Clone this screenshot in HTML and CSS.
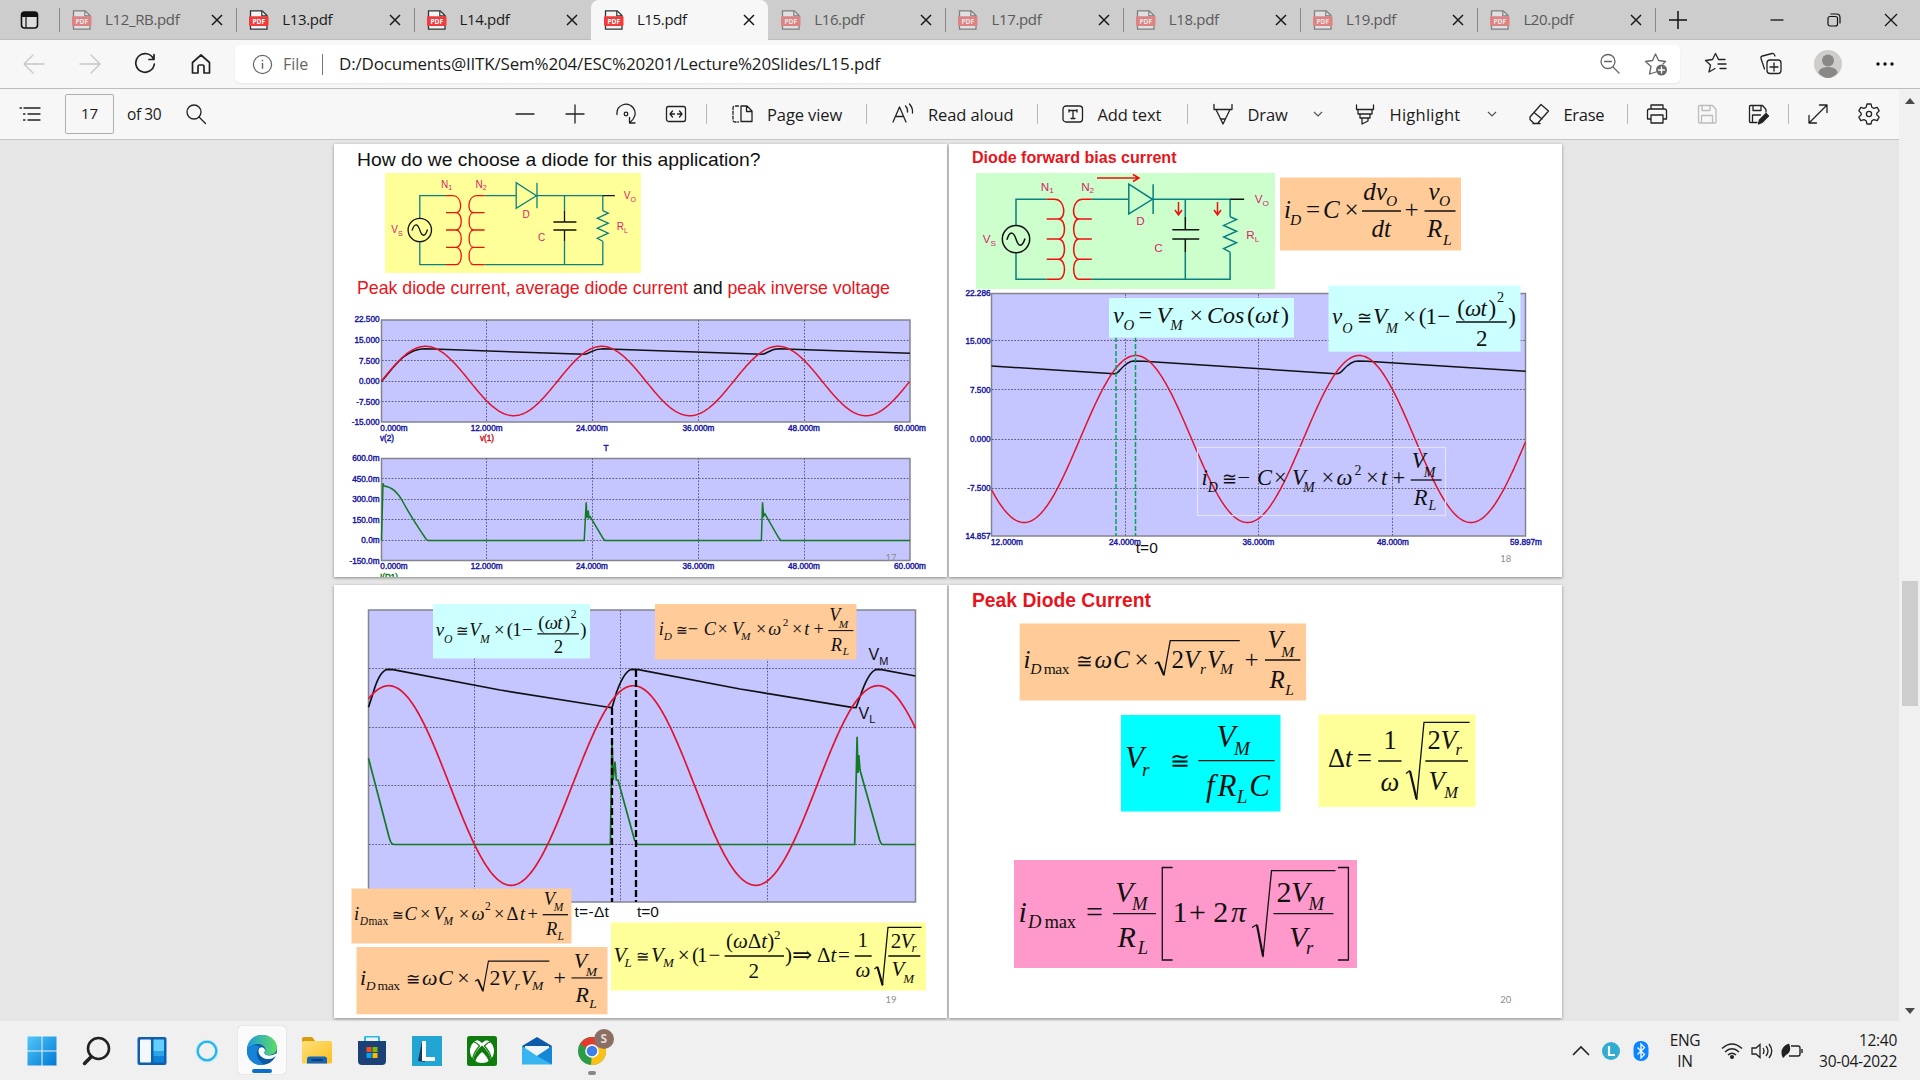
FILE: index.html
```html
<!DOCTYPE html>
<html lang="en">
<head>
<meta charset="utf-8">
<title>L15.pdf</title>
<link rel="stylesheet" href="styles.css">
</head>
<body>
<svg class="defs" width="0" height="0">
  <defs>
    <symbol id="pdf" viewBox="0 0 20 20">
      <path d="M1.500 .8h11.700l4.800 4.800v13.600H1.500z" fill="#f4f4f4" stroke="#333" stroke-width="1.300"/>
      <path d="M12.800 .8v5h5.200" fill="none" stroke="#333" stroke-width="1.200"/>
      <rect x="0" y="6.300" width="19.500" height="9.700" rx="1" fill="#f03c3c"/>
      <text x="9.800" y="14" text-anchor="middle" class="pdf-word">PDF</text>
    </symbol>
    <symbol id="close" viewBox="0 0 12 12"><path d="M1 1l10 10M11 1L1 11" stroke="#1b1b1b" stroke-width="1.500" fill="none"/></symbol>
    <symbol id="chev" viewBox="0 0 12 12"><path d="M2 4l4 4 4-4" stroke="#555" stroke-width="1.200" fill="none"/></symbol>
    <g id="circuit" fill="none" stroke-width="1.300">
      <g stroke="#0a8080">
        <path d="M446 195.700H419.800V218M419.800 242V264.700H446M484.600 195.700H516.200M536.400 195.700H602.800V210.700M484.600 264.700H602.800V241.300M564.500 195.700V210.700M564.500 241.300V264.700"/>
        <path d="M516.200 182.700V208.300L536.400 195.700zM537 182.700V208.300"/>
        <path d="M602.800 210.700l5.500 2.500-11 5 11 5-11 5 11 5-11 5 5.500 3"/>
      </g>
      <g stroke="#f01010">
        <path d="M446 195.700h7c9 0 10 17 3 17h-10h10c7 0 7 17.300 0 17.300h-10h10c7 0 7 17.300 0 17.300h-10h10c7 0 7 17.400 0 17.400h-10"/>
        <path d="M484.600 195.700h-8c-9 0-10 17-3 17h11h-11c-6 0-6 17.300 0 17.300h11h-11c-6 0-6 17.300 0 17.300h11h-11c-6 0-6 17.400 0 17.400h11"/>
      </g>
      <g stroke="#111">
        <circle cx="419.800" cy="230" r="11.700"/>
        <path d="M412 230.500c3-9 6-6 8 0s5 7 7.500-1M602.800 195.700h12M564.500 210.700V222M553.400 222h23M553.400 230h23M564.500 230V241.300"/>
      </g>
      <g class="part">
        <text x="441" y="188.300">N<tspan class="idx" dy="2">1</tspan></text>
        <text x="475.500" y="188.300">N<tspan class="idx" dy="2">2</tspan></text>
        <text x="522.600" y="218">D</text>
        <text x="538" y="241">C</text>
        <text x="623.800" y="199.300">V<tspan class="idx" dy="2.500">O</tspan></text>
        <text x="616.700" y="230">R<tspan class="idx" dy="2.500">L</tspan></text>
        <text x="391.300" y="233.300">V<tspan class="idx" dy="2.500">S</tspan></text>
      </g>
    </g>
    <g id="eq-vo" class="eq" font-size="23">
      <text x="1332 1373" y="324.300">vV</text><text class="u cg" x="1356.500" y="324.300">≅</text><text class="u" x="1403" y="324.300">×</text>
      <text class="s" x="1342.200 1386" y="332.700">OM</text>
      <text class="u" x="1418.700 1425.500 1437.300 1508.300" y="324.300">(1−)</text>
      <path d="M1456 322h50.700"/>
      <text class="u" x="1457.300 1488.500" y="315.700">()</text><text x="1465 1480.500" y="315.700">ωt</text>
      <text class="s u" x="1497" y="302.300">2</text>
      <text class="u" x="1476" y="345.700">2</text>
    </g>
    <g id="eq-id" class="eq" font-size="22.500">
      <text x="1201.500 1257 1292 1336.500 1381" y="485.300">iCVωt</text>
      <text class="u cg" x="1222.300" y="485.300">≅</text>
      <text class="u" x="1237.500 1274 1321.500 1366 1392.500" y="485.300">−×××+</text>
      <text class="s" x="1207.800 1303" y="492">DM</text>
      <text class="s u" x="1354.500" y="474.700">2</text>
      <path d="M1410.600 480h31"/>
      <text x="1411.800" y="468">V</text><text class="s" x="1423.700" y="476.700">M</text>
      <text x="1413.800" y="504.700">R</text><text class="s" x="1428.400" y="510">L</text>
    </g>
    <g id="eq-max" class="eq" font-size="25">
      <text x="1023.500 1094.500 1113" y="667.700">iωC</text><text class="u cg" x="1076" y="667.700">≅</text><text class="u" x="1134.500" y="667.700">×</text>
      <text class="s" x="1030.300" y="674.300">D</text><text class="s u" x="1043.700" y="674.300" textLength="25.700">max</text>
      <path d="M1154.800 664l3.500-2.500"/><path class="thick" d="M1158.300 662l5.600 13"/><path d="M1163.900 675.700l6.300-35h69.600"/>
      <text class="u" x="1171.400" y="667.700">2</text>
      <text x="1184 1207" y="667.700">VV</text><text class="u" x="1244.500" y="667.700">+</text>
      <text class="s" x="1200 1220" y="674.300">rM</text>
      <path d="M1265 660h35.300"/>
      <text x="1267.500" y="648.300">V</text><text class="s" x="1281.300" y="657.300">M</text>
      <text x="1269.500" y="688">R</text><text class="s" x="1285.300" y="695">L</text>
    </g>
    <linearGradient id="gw" x1="0" y1="0" x2="1" y2="1"><stop offset="0" stop-color="#52c8f8"/><stop offset="1" stop-color="#0078d4"/></linearGradient>
    <linearGradient id="ge" x1="0" y1="0" x2="1" y2="0"><stop offset="0" stop-color="#1b9de2"/><stop offset="1" stop-color="#5fdc62"/></linearGradient>
    <linearGradient id="gf" x1="0" y1="0" x2="1" y2="1"><stop offset="0" stop-color="#ffe07a"/><stop offset="1" stop-color="#fbbf1e"/></linearGradient>
  </defs>
</svg>

<header class="tabs">
  <div class="workspace"><svg width="20" height="20" viewBox="0 0 20 20"><rect x="1.500" y="2" width="16" height="16" rx="3" fill="#ddd" stroke="#111" stroke-width="1.600"/><path d="M1.500 7V4.500Q1.500 2 4 2h11q2.500 0 2.500 2.500V7z" fill="#111"/><path d="M6 7v11" stroke="#111" stroke-width="1.200"/></svg></div>
  <div class="tab idle"><svg class="pdf"><use href="#pdf"/></svg><span>L12_RB.pdf</span><svg class="x"><use href="#close"/></svg></div>
  <div class="tab"><svg class="pdf"><use href="#pdf"/></svg><span>L13.pdf</span><svg class="x"><use href="#close"/></svg></div>
  <div class="tab"><svg class="pdf"><use href="#pdf"/></svg><span>L14.pdf</span><svg class="x"><use href="#close"/></svg></div>
  <div class="tab active"><svg class="pdf"><use href="#pdf"/></svg><span>L15.pdf</span><svg class="x"><use href="#close"/></svg></div>
  <div class="tab idle bare"><svg class="pdf"><use href="#pdf"/></svg><span>L16.pdf</span><svg class="x"><use href="#close"/></svg></div>
  <div class="tab idle"><svg class="pdf"><use href="#pdf"/></svg><span>L17.pdf</span><svg class="x"><use href="#close"/></svg></div>
  <div class="tab idle"><svg class="pdf"><use href="#pdf"/></svg><span>L18.pdf</span><svg class="x"><use href="#close"/></svg></div>
  <div class="tab idle"><svg class="pdf"><use href="#pdf"/></svg><span>L19.pdf</span><svg class="x"><use href="#close"/></svg></div>
  <div class="tab idle"><svg class="pdf"><use href="#pdf"/></svg><span>L20.pdf</span><svg class="x"><use href="#close"/></svg></div>
  <div class="newtab"><svg width="18" height="18" viewBox="0 0 18 18"><path d="M9 0v18M0 9h18" stroke="#111" stroke-width="1.500"/></svg></div>
  <div class="winctl">
    <svg width="14" height="14" viewBox="0 0 14 14"><path d="M.5 7h13" stroke="#111" stroke-width="1.300"/></svg>
    <svg width="14" height="14" viewBox="0 0 14 14" fill="none" stroke="#111" stroke-width="1.200"><rect x="1" y="3.500" width="9.500" height="9.500" rx="2"/><path d="M3.500 1h6q3.500 0 3.500 3.500v6"/></svg>
    <svg width="14" height="14" viewBox="0 0 14 14"><path d="M1 1l12 12M13 1L1 13" stroke="#111" stroke-width="1.200"/></svg>
  </div>
</header>

<nav class="address">
  <div class="navbtns">
    <svg class="i faint" viewBox="0 0 24 24"><path d="M22 12H2.500M11 3l-9 9 9 9"/></svg>
    <svg class="i faint" viewBox="0 0 24 24"><path d="M2 12h19.500M13 3l9 9-9 9"/></svg>
    <svg class="i bold" viewBox="0 0 24 24"><path d="M20.500 7A9.300 9.300 0 1 0 21.300 12M21 2.500V7.500H16"/></svg>
    <svg class="i bold" viewBox="0 0 24 24"><path d="M3.500 10.500L12 3l8.500 7.500V21H15v-6.500a1.500 1.500 0 0 0-1.500-1.500h-3A1.500 1.500 0 0 0 9 14.500V21H3.500z"/></svg>
  </div>
  <div class="omnibox">
    <svg class="info" viewBox="0 0 22 22"><circle cx="11" cy="11" r="9.500" fill="none" stroke="#666" stroke-width="1.300"/><path d="M11 9.500v6M11 6v1.600" stroke="#666" stroke-width="1.500"/></svg>
    <span class="scheme">File</span>
    <span class="url">D:/Documents@IITK/Sem%204/ESC%20201/Lecture%20Slides/L15.pdf</span>
    <div class="boxicons">
      <svg class="i gray" viewBox="0 0 24 24"><circle cx="10" cy="9.500" r="7"/><path d="M15 15l6 6M6.500 9.500h7"/></svg>
      <svg class="i gray" viewBox="0 0 24 24"><path d="M12 20l-6.500 2L7 14.500 1.500 9.500l7-1L11.500 2l3 6.500 7 1-2.500 2.500"/><circle cx="17.500" cy="18" r="5.500" fill="#666" stroke="none"/><path d="M17.500 15v6M14.500 18h6" stroke="#fff"/></svg>
    </div>
  </div>
  <div class="profile">
    <svg class="i" viewBox="0 0 24 24"><path d="M11 16.500L5 20l1.500-7L1.500 8.500l7-1L11.500 1.500l3 6H21M14 12h8M16 16.500h6"/></svg>
    <svg class="i" viewBox="0 0 24 24"><rect x="8" y="8" width="14" height="13.500" rx="3"/><path d="M15 11v8M11 15h8M5.500 17L2 6.500Q1.500 4.500 3.500 4L13 1.500q2-.5 3 2.500"/></svg>
    <svg class="avatar" viewBox="0 0 28 28"><circle cx="14" cy="14" r="14" fill="#cfcdcb"/><circle cx="14" cy="10.500" r="6" fill="#8a8785"/><path d="M4.500 23c0-8 19-8 19 0Q19 28 14 28t-9.500-5z" fill="#8a8785"/></svg>
    <svg class="i" viewBox="0 0 24 24"><g fill="#111" stroke="none"><circle cx="5" cy="12" r="1.700"/><circle cx="12" cy="12" r="1.700"/><circle cx="19" cy="12" r="1.700"/></g></svg>
  </div>
</nav>

<div class="toolbar">
  <div class="pager">
    <svg class="i" viewBox="0 0 24 24"><path d="M6 6h16M10 12h12M10 18h12M2 6h1.500M5.500 12h1.500M5.500 18h1.500"/></svg>
    <span class="pageno">17</span><span class="of">of 30</span>
    <svg class="i" viewBox="0 0 24 24"><circle cx="10" cy="10" r="7"/><path d="M15 15l6.500 6.500"/></svg>
  </div>
  <div class="zoom">
    <svg class="i" viewBox="0 0 24 24"><path d="M3 12h18"/></svg>
    <svg class="i" viewBox="0 0 24 24"><path d="M3 12h18M12 3v18"/></svg>
    <svg class="i" viewBox="0 0 24 24"><circle cx="12" cy="12" r="1.800"/><path d="M3 12.500C2 3 13-1 19 5.500c4 5 2 11-3 15M15.500 15.500v5.500h5.500"/></svg>
    <svg class="i" viewBox="0 0 24 24"><rect x="2.500" y="4.500" width="19" height="15" rx="2"/><path d="M6 12h4.500M18 12h-4.500M8.500 9L6 12l2.500 3M15.500 9l2.500 3-2.500 3"/></svg>
  </div>
  <div class="tool view"><svg class="i" viewBox="0 0 24 24"><path d="M11 4h6l5 5v10.500H11zM16.500 4v5.500H22"/><path d="M8.500 4H5Q3 4 3 6v12q0 2 2 2h3.500" stroke-dasharray="3 1.800"/></svg><span>Page view</span></div>
  <div class="tool read"><svg class="i" viewBox="0 0 24 24"><path d="M2 20L8.500 5 15 20M4.500 14.500h8M14.500 4q2.500 2.500 2 6M18.500 2q3.500 4 3 9"/></svg><span>Read aloud</span></div>
  <div class="tool add"><svg class="i" viewBox="0 0 24 24"><rect x="2" y="4" width="19.500" height="16" rx="3"/><path d="M8 8.500h8M12 8.500v8M8 7.700v2.300M16 7.700v2.300M10 16.500h4"/></svg><span>Add text</span></div>
  <div class="tool draw"><svg class="i" viewBox="0 0 24 24"><path d="M3 2.500v5h18v-5M5 7.500l7 14.500 7-14.500M9.500 17h5"/></svg><span>Draw</span><svg class="c"><use href="#chev"/></svg></div>
  <div class="tool mark"><svg class="i" viewBox="0 0 24 24"><path d="M3.500 3v4.500h17V3M5 7.500V12h14V7.500M7 12v4h10v-4M9 16v6l6-3v-3"/></svg><span>Highlight</span><svg class="c"><use href="#chev"/></svg></div>
  <div class="tool erase"><svg class="i" viewBox="0 0 24 24"><path d="M14 2.500L21.500 9 10.500 21.500H7L3 17.500V15zM7 10.500l8 6.500M6 21.500h7"/></svg><span>Erase</span></div>
  <div class="files">
    <svg class="i" viewBox="0 0 24 24"><path d="M6 7V3h12v4M6 17H2.500V9q0-2 2-2h15q2 0 2 2v8H18M6 13h12v8H6z"/></svg>
    <svg class="i off" viewBox="0 0 24 24"><path d="M3.500 4.500q0-1 1-1h13l3.500 4V20q0 1-1 1h-15.500q-1 0-1-1zM7 3.500v5h8v-5M6.500 21v-7.500h11V21"/></svg>
    <svg class="i" viewBox="0 0 24 24"><path d="M11 20.500H4.500q-1 0-1-1v-15q0-1 1-1h12l3.500 4V10M7 3.500v5h8v-5M6.500 20v-7h8"/><path d="M12.500 22l1-4 6.500-6.500 2.500 2.500L16 20.500z" fill="#222"/></svg>
  </div>
  <div class="ends">
    <svg class="i" viewBox="0 0 24 24"><path d="M3 21L21 3M13.500 3H21v7.500M3 13.500V21h7.500"/></svg>
    <svg class="i" viewBox="0 0 24 24"><circle cx="12" cy="12" r="2.600"/><path d="M10 2h4l.8 3.200 2.200 1.200 3.200-1 2 3.500-2.400 2.300v1.600l2.400 2.300-2 3.500-3.200-1-2.200 1.200L14 22h-4l-.8-3.200L7 17.600l-3.200 1-2-3.500 2.400-2.300v-1.600L1.800 8.900l2-3.500 3.200 1 2.200-1.200z"/></svg>
  </div>
</div>

<main class="viewer">
  <div class="sheets">
    <svg class="slide" viewBox="334 144 613 433">
      <text x="357" y="166" class="sans" font-size="19" textLength="403.500" lengthAdjust="spacingAndGlyphs">How do we choose a diode for this application?</text>
      <rect x="385" y="173" width="256" height="100" fill="#ff9"/>
      <use href="#circuit"/>
      <text x="357" y="294.300" class="sans red" font-size="18.500" textLength="533" lengthAdjust="spacingAndGlyphs">Peak diode current, average diode current <tspan class="black">and</tspan> peak inverse voltage</text>

      <rect class="plot" x="381.500" y="320" width="528.500" height="102"/>
      <path class="grid" d="M382 340.500H910M382 360.500H910M382 381.500H910M382 401.500H910M486.500 320v102M592.500 320v102M698.500 320v102M804.500 320v102"/>
      <path class="trace" stroke="#111" d="M381.500 381.500C392 370 404 348.700 425 348.700L440 349.300 584.200 354.300C590 354 592 348.700 602.800 348.700L615 349.200 761.800 354.300C768 354 769 348.700 779.600 348.700L792 349.200 910 353.300"/>
      <path class="trace" data-wave="381.500 910 425.500 176.200 381 34.700" stroke="#e0142c"/>
      <g class="axis end"><text x="379.500" y="322">22.500</text><text x="379.500" y="343">15.000</text><text x="379.500" y="363.500">7.500</text><text x="379.500" y="384">0.000</text><text x="379.500" y="404.500">-7.500</text><text x="379.500" y="425">-15.000</text></g>
      <g class="axis mid"><text x="394" y="430.500">0.000m</text><text x="486.600" y="430.500">12.000m</text><text x="592" y="430.500">24.000m</text><text x="698.500" y="430.500">36.000m</text><text x="804" y="430.500">48.000m</text><text x="910" y="430.500">60.000m</text><text x="387" y="440.500">v(2)</text><text x="487" y="440.500" class="rd">v(1)</text><text x="606" y="450.500">T</text></g>

      <rect class="plot" x="381.500" y="458.500" width="528.500" height="102"/>
      <path class="grid" d="M382 478.500H910M382 499.500H910M382 519.500H910M382 540.500H910M486.500 458v102M592.500 458v102M698.500 458v102M804.500 458v102"/>
      <path class="trace" stroke="#117a22" d="M381.500 540.500L383 483.300 384 486Q395 487 403 502T426 539L428 540.500H584.200L586.200 502.300 587 518 588.200 510.700 589 518 590.200 516.700 602.800 538 605.200 540.500H761.400L762.500 502.300 763.700 516 765 514 778.800 538 780.800 540.500H910"/>
      <g class="axis end"><text x="379.500" y="461">600.0m</text><text x="379.500" y="481.500">450.0m</text><text x="379.500" y="502">300.0m</text><text x="379.500" y="522.500">150.0m</text><text x="379.500" y="543">0.0m</text><text x="379.500" y="563.500">-150.0m</text></g>
      <g class="axis mid"><text x="394" y="569">0.000m</text><text x="486.600" y="569">12.000m</text><text x="592" y="569">24.000m</text><text x="698.500" y="569">36.000m</text><text x="804" y="569">48.000m</text><text x="910" y="569">60.000m</text><text x="389" y="579.500" class="gr">I(D1)</text></g>
      <text x="885.500" y="561" class="num">17</text>
    </svg>

    <svg class="slide" viewBox="949 144 613 433">
      <text x="972" y="162.700" class="sans red b" font-size="16.300" textLength="204.500" lengthAdjust="spacingAndGlyphs">Diode forward bias current</text>
      <rect class="plot" x="991.500" y="293.500" width="534" height="242.500"/>
      <path class="grid" d="M992 340.500H1525M992 389.500H1525M992 439.500H1525M992 488.500H1525M1125.500 294v242M1258.500 294v242M1392.500 294v242"/>
      <rect x="976" y="173" width="299" height="116" fill="#cfc"/>
      <g transform="translate(1016 199.300) scale(1.17 1.16) translate(-419.800 -195.700)"><use href="#circuit"/></g>
      <path d="M1097 178H1138M1133 174.500l6 3.500-6 3.500M1178.500 202v12M1175 210l3.500 5 3.500-5M1217.500 202v12M1214 210l3.500 5 3.500-5" stroke="#f01010" stroke-width="1.500" fill="none"/>
      <path class="trace" stroke="#111" d="M991.500 366L1114 373.700Q1117 374 1120 370 1128 361 1134 361L1144 361.300 1335.500 373.700Q1340 374 1343 370 1351 361 1358 361L1367 361.300 1525.700 371.300"/>
      <path class="trace" data-wave="991.500 1525.700 1135.800 223.400 439 83.500" stroke="#e0142c"/>
      <path d="M1116 337V536M1135.500 337V536" stroke="#00a651" stroke-width="1.500" stroke-dasharray="5 2" fill="none"/>
      <rect x="1280" y="177.500" width="181" height="73" fill="#fc9"/>
      <g class="eq" font-size="25">
        <text x="1284 1323" y="218">iC</text><text class="u" x="1306 1344.500 1404.500" y="218">=×+</text><text class="s" x="1290" y="224.700">D</text>
        <path d="M1362 211h39M1424.500 211h31"/>
        <text x="1363.200 1376" y="200.300">dv</text><text class="s" x="1386" y="206">O</text><text x="1371.500" y="237.300">dt</text>
        <text x="1428.500" y="200.300">v</text><text class="s" x="1439" y="206">O</text><text x="1427" y="237.300">R</text><text class="s" x="1443" y="244.700">L</text>
      </g>
      <rect x="1109" y="298" width="185" height="39.700" fill="#cff"/>
      <g class="eq" font-size="24">
        <text x="1113 1156.500 1207" y="322.700">vVCos</text><text class="u" x="1138.500 1189.500" y="322.700">=×</text><text class="s" x="1123.500 1170.200" y="330.300">OM</text>
        <text class="u" x="1247 1281" y="322.700">()</text><text x="1255 1272" y="322.700">ωt</text>
      </g>
      <rect x="1328.500" y="285.700" width="192" height="66" fill="#cff"/>
      <use href="#eq-vo"/>
      <rect x="1197.500" y="447.500" width="248" height="68" fill="none" stroke="#e6e1ef" stroke-width="1.200"/>
      <use href="#eq-id"/>
      <g class="axis end"><text x="990.500" y="295.500">22.286</text><text x="990.500" y="343.500">15.000</text><text x="990.500" y="392.500">7.500</text><text x="990.500" y="442">0.000</text><text x="990.500" y="491">-7.500</text><text x="990.500" y="539">14.857</text></g>
      <g class="axis mid"><text x="1007" y="544.500">12.000m</text><text x="1125" y="544.500">24.000m</text><text x="1258.500" y="544.500">36.000m</text><text x="1393" y="544.500">48.000m</text><text x="1526" y="544.500">59.897m</text></g>
      <text x="1135.800" y="553" class="sans" font-size="15.500">t=0</text>
      <text x="1500.300" y="561.500" class="num">18</text>
    </svg>

    <svg class="slide" viewBox="334 585 613 433">
      <rect class="plot" x="368.500" y="610" width="547" height="292"/>
      <path class="grid" d="M369 668.500H915M369 727.500H915M369 785.500H915M369 844.500H915M474.500 610v292M620.500 610v292M767.500 610v292"/>
      <path class="trace dark" stroke="#111" d="M368.500 707.300L373.500 691.700Q380 669.300 388.500 669.300L393 669.700 500 690 606.800 707 612 707.700 616.700 691.700Q625 669.300 632.500 669.300L638.400 669.700 740 689 852 707.300 856 707.700 861.800 691.700Q870 669.300 877.600 669.300L881.600 669.700 915.500 676"/>
      <path class="trace dark" stroke="#117a22" d="M368.500 758.300L389.300 838Q391 844.500 394 844.500H610.400L612 740 613.200 780 615 761.700 616.300 780 618 780 634.500 840 637.600 844.500H854.700L857.100 736.700 858 773 858.800 755 860 770 879.600 840Q881 844.500 883 844.500H915.500"/>
      <path class="trace dark" data-wave="368.500 915.500 388.700 244.700 785.500 99.800" stroke="#e0142c"/>
      <path d="M612 708V902M636 670V902" stroke="#000" stroke-width="2.300" stroke-dasharray="7 3" fill="none"/>
      <rect x="433" y="604" width="157" height="54.500" fill="#cff"/>
      <g transform="translate(432.800 604) scale(.819 .823) translate(-1328.400 -285.700)"><use href="#eq-vo"/></g>
      <rect x="655" y="604" width="201.500" height="55.500" fill="#fc9"/>
      <g transform="translate(655 604) scale(.811 .813) translate(-1197 -447.300)"><use href="#eq-id"/></g>
      <text x="868.500" y="660.300" class="sans" font-size="16">V<tspan font-size="11" dy="4.500">M</tspan></text>
      <text x="858.500" y="718.500" class="sans" font-size="16">V<tspan font-size="11" dy="4">L</tspan></text>
      <rect x="351.500" y="888.500" width="220" height="55" fill="#fc9"/>
      <g class="eq" font-size="18.500">
        <text x="354 404.500 433.600 471.500 520" y="920.300">iCVωt</text><text class="u cg" x="392" y="920.300">≅</text>
        <text class="u" x="420 458.700 494 506.500 527.500" y="920.300">×××Δ+</text>
        <text class="s" x="359.700" y="924.800">D</text><text class="s u" x="368.400" y="924.800">max</text><text class="s" x="443.500" y="924.500">M</text><text class="s u" x="485" y="910">2</text>
        <path d="M542.700 914.700H568"/>
        <text x="543.800" y="905">V</text><text class="s" x="553.700" y="911">M</text><text x="546" y="935">R</text><text class="s" x="557.400" y="940">L</text>
      </g>
      <rect x="356.500" y="947" width="251" height="67.300" fill="#fc9"/>
      <g transform="translate(356.500 946) scale(.876 .87) translate(-1019.600 -623.300)"><use href="#eq-max"/></g>
      <text x="574.400" y="916.700" class="sans" font-size="15.500" textLength="34.500">t=-Δt</text>
      <text x="637" y="916.700" class="sans" font-size="15.500">t=0</text>
      <rect x="611" y="922.500" width="315" height="68" fill="#ff9"/>
      <g class="eq" font-size="21">
        <text x="613.500 651" y="961.700">VV</text><text class="u cg" x="635.800" y="961.700">≅</text><text class="u" x="677.700" y="961.700">×</text><text class="s" x="624.600 663" y="966.700">LM</text>
        <text class="u" x="692 697 708.500 785 817 838" y="961.700">(1−)Δ=</text><text class="u wide" x="792" y="962.500">⇒</text><text x="830.500" y="961.700">t</text>
        <path d="M724.600 956H784M854.700 956h17M888.300 956h32"/>
        <text class="u" x="726" y="948.300">(<tspan class="it">ω</tspan>Δ<tspan class="it">t</tspan>)</text><text class="s u" x="774" y="939">2</text><text class="u" x="748.500" y="977.700">2</text>
        <text class="u" x="857.500" y="947.300">1</text><text x="855.500" y="977.300">ω</text>
        <path d="M874.500 969l3-2.500"/><path class="thick" d="M877.500 967l5 18"/><path d="M882.400 985.700L888 927.300h33.500"/>
        <text class="u" x="890.700" y="948">2</text><text x="900.500" y="948">V</text><text class="s" x="911.500" y="951.700">r</text>
        <text x="891.500" y="975.700">V</text><text class="s" x="903.300" y="983.300">M</text>
      </g>
      <text x="885.500" y="1002.500" class="num">19</text>
    </svg>

    <svg class="slide" viewBox="949 585 613 433">
      <text x="972" y="606.700" class="sans red b" font-size="19.500" textLength="179" lengthAdjust="spacingAndGlyphs">Peak Diode Current</text>
      <rect x="1019.600" y="623.500" width="286.500" height="77" fill="#fc9"/>
      <use href="#eq-max"/>
      <rect x="1121" y="715" width="159.500" height="96.500" fill="#0ff"/>
      <g class="eq" font-size="31">
        <text x="1125" y="767.700">V</text><text class="u cg" x="1170" y="768.500">≅</text><text class="s" x="1142" y="776">r</text>
        <path d="M1198.300 760.700h76.300"/>
        <text x="1216.500" y="746.700">V</text><text class="s" x="1233.900" y="755.300">M</text>
        <text x="1206 1217.500 1249.300" y="796.300">fRC</text><text class="s" x="1236.700" y="803.300">L</text>
      </g>
      <rect x="1318.500" y="714.500" width="157" height="92.500" fill="#ff9"/>
      <g class="eq" font-size="26.500">
        <text class="u" x="1328 1357" y="767.300">Δ=</text><text x="1345" y="767.300">t</text>
        <path d="M1378.200 761h23.300M1425.300 761H1468"/>
        <text class="u" x="1383.500 1427.600" y="749.300">12</text><text x="1380.500" y="790.700">ω</text>
        <path d="M1406 773.500l4-3"/><path class="thick" d="M1410 771l6.500 28"/><path d="M1416.600 800L1424 722.300h45.600"/>
        <text x="1440.500" y="749.300">V</text><text class="s" x="1455.500" y="755.300">r</text><text x="1428.600" y="790">V</text><text class="s" x="1444.200" y="798">M</text>
      </g>
      <rect x="1014" y="860" width="343" height="108" fill="#f9c"/>
      <g class="eq" font-size="30">
        <text x="1018.500" y="921.700">i</text><text class="u" x="1086 1189" y="921.700">=+</text><text class="s" x="1028" y="928.300">D</text><text class="s u" x="1044.500" y="928.300" textLength="31.500">max</text>
        <path d="M1112.900 913.700h43M1273.400 913.700h60M1172.600 867.500h-10.300v92.500h10.300M1337.900 867.500h10.500v92.500h-10.500"/>
        <text x="1115" y="901.700">V</text><text class="s" x="1131.900" y="910">M</text><text x="1117.500" y="946.700">R</text><text class="s" x="1137.800" y="954.300">L</text>
        <text class="u" x="1172.500 1213.200" y="921.700">12</text><text x="1231" y="921.700">π</text>
        <path d="M1252 927.500l5-3"/><path class="thick" d="M1257 925l6 31"/><path d="M1263 957.300L1271.500 870.700h64"/>
        <text class="u" x="1276.500" y="901.700">2</text><text x="1291" y="901.700">V</text><text class="s" x="1308.600" y="910">M</text>
        <text x="1289" y="946.700">V</text><text class="s" x="1305.900" y="954.300">r</text>
      </g>
      <text x="1500.300" y="1002.500" class="num">20</text>
    </svg>
  </div>
  <div class="scroll">
    <svg width="12" height="8" viewBox="0 0 12 8"><path d="M6 1l5 6H1z" fill="#4a4a4a"/></svg>
    <div class="thumb"></div>
    <svg width="12" height="8" viewBox="0 0 12 8"><path d="M6 7l5-6H1z" fill="#4a4a4a"/></svg>
  </div>
</main>

<footer class="taskbar">
  <div class="apps">
    <div class="app"><svg viewBox="0 0 30 30"><path fill="url(#gw)" d="M.5.5h14v14H.500zM15.500.500h14v14h-14zM.500 15.500h14v14H.500zM15.500 15.500h14v14h-14z"/></svg></div>
    <div class="app"><svg viewBox="0 0 30 30" fill="none" stroke="#222" stroke-linecap="round"><circle cx="16.500" cy="12.500" r="10.500" stroke-width="2.600"/><path d="M9 21l-6.500 6.500" stroke-width="3.500"/></svg></div>
    <div class="app"><svg viewBox="0 0 30 30"><rect x=".5" y="1" width="29" height="28" rx="2" fill="#0f5fae"/><rect x="3" y="3.500" width="11" height="23" rx="1" fill="#f4f8fc"/><rect x="16.500" y="3.500" width="10.500" height="11.500" fill="#62d0fa"/><rect x="16.500" y="15" width="10.500" height="5.500" fill="#2ba4e8"/><rect x="16.500" y="20.500" width="10.500" height="6" fill="#0a83d9"/></svg></div>
    <div class="app"><svg viewBox="0 0 30 30" fill="none"><circle cx="15" cy="15" r="9.500" stroke="#a9e4fa" stroke-width="3.500"/><circle cx="15" cy="15" r="9.300" stroke="#21b3e8" stroke-width="2"/></svg></div>
    <div class="app open"><svg viewBox="0 0 30 30"><circle cx="15" cy="15" r="15" fill="#0c59a4"/><path d="M0 14C1 5 7 0 15 0c9 0 15 6 15 12.500 0 5-4 7.500-8.500 7.500-3.500 0-5-1.500-3.500-3.500 3-6-9-12-18-2.500z" fill="url(#ge)"/><path d="M0 15c3-5 9-6 13-3-5 3-5 12 5 18C6 32-1 23 0 15z" fill="#1683d6"/><path d="M12.500 13c2.500-2 6 0 5.500 3-2 2.500 0 4.500 4 4.500 3 0 5-.8 7-2l2 1-1 3-2-1c-2 2-4 2.500-7 2.500-6 0-12-6-8.500-11z" fill="#f7f9fb"/></svg></div>
    <div class="app"><svg viewBox="0 0 30 30"><path d="M0 3q0-2 2-2h8l3 3.500V9H0z" fill="#d99a0c"/><rect y="5" width="30" height="22.500" rx="1.500" fill="url(#gf)"/><path d="M5 27.500V23q0-2.500 2.500-2.500h15q2.500 0 2.500 2.500v4.500z" fill="#1565b7"/><rect x="9" y="23" width="12" height="2" rx="1" fill="#0a3f7d"/></svg></div>
    <div class="app"><svg viewBox="0 0 30 30"><path d="M8 6V2q0-1.500 1.500-1.500h11Q22 .500 22 2v4" fill="none" stroke="#26b9ea" stroke-width="2"/><path d="M1 5h28v20q0 4-4 4H5q-4 0-4-4z" fill="#1b4176"/><path fill="#f25022" d="M9.500 11h5v5h-5z"/><path fill="#7fba00" d="M15.500 11h5v5h-5z"/><path fill="#00a4ef" d="M9.500 17h5v5h-5z"/><path fill="#ffb900" d="M15.500 17h5v5h-5z"/></svg></div>
    <div class="app"><svg viewBox="0 0 30 30"><rect width="30" height="30" fill="#22a5d2"/><path d="M10 5L6 25l7 1z" fill="#123a5c"/><path d="M10 5h4v16h9v4H10z" fill="#fff"/></svg></div>
    <div class="app"><svg viewBox="0 0 30 30"><rect width="30" height="30" rx="2.500" fill="#107c10"/><circle cx="15" cy="15" r="12" fill="#fff"/><path d="M9 4q3 0 6 3 3-3 6-3l-1.500-1.500h-9zM15 9.500Q8 15 6 24l2 2q2-6 7-10 5 4 7 10l2-2Q22 15 15 9.500z" fill="#107c10"/><path d="M6.500 6Q9 6 12.500 10 7 16 5.500 23M23.500 6Q21 6 17.500 10 23 16 24.500 23" fill="none" stroke="#107c10" stroke-width="1.200"/></svg></div>
    <div class="app"><svg viewBox="0 0 30 30"><path d="M0 10L15 1l15 9v5H0z" fill="#0d5ba8"/><path d="M3 10h24v9H3z" fill="#f2f5f8"/><path d="M0 10l15 10L30 10v18.500H0z" fill="#38b4f0"/><path d="M15 20L30 10v18.500z" fill="#1487d8"/></svg></div>
    <div class="app chrome"><svg viewBox="0 0 30 30"><circle cx="15" cy="15" r="14" fill="#2c9b48"/><path d="M15 15L2.900 8A14 14 0 0 1 27.100 8z" fill="#e33b2e"/><path d="M15 15L27.100 8A14 14 0 0 1 14 29z" fill="#fbc116"/><path d="M14 8h13.100" stroke="#e33b2e" stroke-width="2"/><circle cx="15" cy="15" r="6.800" fill="#fff"/><circle cx="15" cy="15" r="5.300" fill="#3f7fe8"/></svg><b class="badge">S</b></div>
  </div>
  <div class="tray">
    <svg viewBox="0 0 24 24"><path d="M4 16l8-8 8 8" stroke="#222" stroke-width="1.600" fill="none"/></svg>
    <svg viewBox="0 0 24 24"><circle cx="12" cy="12" r="9" fill="#32acd0"/><path d="M10 7v9h6" stroke="#fff" stroke-width="2.200" fill="none"/></svg>
    <svg viewBox="0 0 24 24"><rect x="4.500" y="2" width="15" height="20" rx="7" fill="#0a84ff"/><path d="M8.500 8.500l7 7L12 19V5l3.500 3.500-7 7" stroke="#fff" stroke-width="1.300" fill="none"/></svg>
    <div class="lang">ENG<br>IN</div>
    <svg viewBox="0 0 24 24" fill="none" stroke="#222" stroke-width="1.500"><path d="M2 9.500q10-9 20 0M5 13q7-6.500 14 0M8 16q4-3.500 8 0"/><circle cx="12" cy="18" r="1.300" fill="#222"/></svg>
    <svg viewBox="0 0 24 24" fill="none" stroke="#222" stroke-width="1.300"><path d="M2 9h4l4-3.500v13L6 15H2zM13 9q2 3 0 6M16 7q4 5 0 10M19 5q5.500 7 0 14"/></svg>
    <svg viewBox="0 0 24 24" fill="none" stroke="#222" stroke-width="1.400"><path d="M11 7h7q2 0 2 2v6q0 2-2 2H9M22 10v4"/><path d="M2 17Q-.5 8 9 4.500q3.500 8-3 11.500l-3 3z" fill="#222" stroke="none"/></svg>
    <div class="clock">12:40<br>30-04-2022</div>
  </div>
</footer>
<script src="waves.js"></script>
</body>
</html>
```
FILE: styles.css
```css
* { box-sizing: border-box; }
body { margin: 0; width: 1920px; height: 1080px; overflow: hidden; display: flex; flex-direction: column; background: #f0f0f0; color: #1b1b1b; font-family: "Open Sans", "Noto Sans", sans-serif; }
svg { display: block; flex: none; }
.defs { position: absolute; }

.tabs { display: flex; height: 40px; background: #cdcdcd; box-shadow: inset 0 -1px #bebebe; flex: none; }
.workspace { width: 59px; display: flex; align-items: center; padding-left: 20px; }
.tab { width: 177.3px; display: flex; align-items: center; padding: 0 12px 0 13px; font-size: 15px; line-height: 20px; letter-spacing: -.35px; background: linear-gradient(#888, #888) 0 8px / 1px 24px no-repeat; }
.tab span { flex: 1; margin: -2px 0 0 13px; white-space: nowrap; }
.tab .pdf { width: 20px; height: 20px; }
.tab .x { width: 12px; height: 12px; margin-right: 1px; }
.tab.idle span { color: #5a5a5a; }
.tab.idle .pdf { opacity: .5; }
.tab.active { background: #f7f7f7; border-radius: 8px 8px 0 0; }
.tab.bare { background: none; }
.pdf-word { font: bold 6.600px "Open Sans", sans-serif; fill: #fff; letter-spacing: 0; }
.newtab { display: flex; align-items: center; padding-left: 14px; background: linear-gradient(#888, #888) 0 8px / 1px 24px no-repeat; }
.winctl { display: flex; align-items: center; gap: 43px; margin-left: auto; padding-right: 22px; }

.i { width: 24px; height: 24px; fill: none; stroke: #222; stroke-width: 1.300; stroke-linejoin: round; stroke-linecap: round; }
.i.faint { stroke: #c6c6c6; }
.i.bold { stroke-width: 1.700; }
.i.gray { stroke: #666; }
.i.off { stroke: #bcbcbc; }

.address { display: flex; align-items: center; height: 49px; background: #f7f7f7; border-bottom: 1px solid #bdbdbd; flex: none; }
.navbtns { display: flex; width: 235px; gap: 31.500px; padding-left: 22px; }
.omnibox { width: 1445px; height: 38px; display: flex; align-items: center; background: #fff; border-radius: 5px; padding-left: 17px; box-shadow: 0 1px 2px #e4e4e4; font-size: 17px; }
.info { width: 21px; height: 21px; }
.scheme { width: 40px; margin-left: 10px; color: #666; border-right: 1px solid #777; line-height: 21px; font-size: 16px; letter-spacing: 0; }
.url { margin: -2px 0 0 16px; letter-spacing: -.18px; white-space: nowrap; }
.boxicons { display: flex; gap: 22px; margin-left: auto; padding-right: 12px; }
.profile { display: flex; align-items: center; gap: 31px; padding-left: 24px; }
.avatar { width: 28px; height: 28px; }

.toolbar { display: flex; height: 51px; background: #f7f7f7; border-bottom: 1px solid #c6c6c6; flex: none; font-size: 16.500px; letter-spacing: -.1px; }
.pager { display: flex; align-items: center; width: 500px; padding-left: 18px; }
.pageno { width: 49px; height: 40px; margin: 0 13px 0 23px; border: 1px solid #b0b0b0; border-radius: 2px; text-align: center; line-height: 37px; font-size: 15px; }
.of { width: 57px; font-size: 15.500px; letter-spacing: -.4px; }
.zoom { display: flex; align-items: center; gap: 26.300px; width: 206px; padding-left: 13px; }
.tool, .ends { display: flex; align-items: center; background: linear-gradient(#b9b9b9, #b9b9b9) 0 15px / 1px 20px no-repeat; padding-left: 24px; white-space: nowrap; }
.tool span { margin-left: 13px; }
.c { width: 12px; height: 12px; margin: 0 5px 0 auto; }
.view { width: 160px; }
.read { width: 170.500px; padding-left: 25px; }
.add { width: 150px; }
.draw { width: 142px; }
.mark { width: 174px; background: none; letter-spacing: .25px; }
.erase { width: 124.500px; background: none; letter-spacing: -.3px; }
.files { display: flex; align-items: center; gap: 26.300px; width: 161px; padding-left: 18px; background: linear-gradient(#b9b9b9, #b9b9b9) 0 15px / 1px 20px no-repeat; }
.ends { gap: 26.500px; padding-left: 18px; }

.viewer { display: flex; height: 881px; background: #e6e6e6; flex: none; }
.sheets { display: grid; grid-template-columns: 613px 613px; grid-template-rows: 433px 433px; column-gap: 2px; row-gap: 8px; padding: 4px 337px 0 334px; width: 1899px; flex: none; }
.slide { width: 613px; height: 433px; background: #fff; box-shadow: 0 1px 3px #888; overflow: hidden; }
.scroll { width: 21px; display: flex; flex-direction: column; align-items: center; background: #f0f0f0; padding: 8px 0 6px; margin-top: -51px; }
.thumb { width: 16px; height: 125px; margin: 476px 0 auto; background: #cdcdcd; }

.sans { font-family: "Liberation Sans", Arial, sans-serif; fill: #111; }
.red { fill: #e8141c; }
.black { fill: #111; }
.b { font-weight: bold; }
.num { font: 9.500px Lato, sans-serif; fill: #8c8c8c; }
.part { font: 10px "Liberation Sans", sans-serif; fill: #d6246c; stroke: none; }
.idx { font-size: 7px; }
.plot { fill: #c5c5ff; stroke: #84848c; stroke-width: 1.500; }
.grid { fill: none; stroke: #5e5e76; stroke-width: 1; stroke-dasharray: 1.700 1.500; }
.trace { fill: none; stroke-width: 1.500; }
.dark { stroke-width: 1.700; }
.axis { font: 8.200px "Liberation Sans", sans-serif; fill: #1515a0; stroke: #1515a0; stroke-width: .4px; }
.end { text-anchor: end; }
.mid { text-anchor: middle; }
.rd { fill: #c81420; stroke: #c81420; }
.gr { fill: #117a22; stroke: #117a22; }
.eq { font-family: "Liberation Serif", "DejaVu Serif", serif; font-style: italic; fill: #111; }
.eq path { fill: none; stroke: #111; stroke-width: 1.300; }
.eq .thick { stroke-width: 2.200; }
.s { font-size: .62em; }
.u { font-style: normal; }
.it { font-style: italic; }
.cg { font-size: .78em; }
.wide { font-size: 1.150em; }

.taskbar { display: flex; height: 59px; background: #f0f0f0; justify-content: space-between; flex: none; }
.apps { display: flex; padding-left: 14px; }
.app { width: 55.100px; display: flex; align-items: center; justify-content: center; position: relative; }
.app svg { width: 30px; height: 30px; }
.open { width: 48px; height: 48px; margin: 5px 3.500px 0; background: #fafafa; border-radius: 4px; box-shadow: 0 0 1px #aaa; }
.open::after, .chrome::after { content: ""; position: absolute; bottom: 1px; width: 20px; height: 4px; border-radius: 2px; background: #0a6fc8; }
.chrome::after { width: 8px; bottom: 5px; background: #888; }
.badge { position: absolute; left: 29px; top: 8px; width: 20px; height: 20px; border-radius: 50%; background: #8d6e63; color: #ddd; font-size: 12px; line-height: 20px; text-align: center; }
.tray { display: flex; align-items: center; padding-right: 23px; font-size: 15.500px; line-height: 20.500px; letter-spacing: -.3px; }
.tray svg { width: 24px; height: 24px; margin: 0 3px; }
.lang { width: 58px; text-align: center; margin: 0 3px 0 0; }
.clock { width: 90px; text-align: right; white-space: nowrap; }
```
FILE: waves.js
```js
// Cosine traces: data-wave holds "x0 x1 peakX period midY amplitude".
document.querySelectorAll("[data-wave]").forEach(function (path) {
  var w = path.dataset.wave.split(" ").map(Number);
  var points = [];
  for (var x = w[0]; x <= w[1]; x += 1) {
    points.push(x.toFixed(1) + " " + (w[4] - w[5] * Math.cos(2 * Math.PI * (x - w[2]) / w[3])).toFixed(2));
  }
  path.setAttribute("d", "M" + points.join("L"));
});
```
